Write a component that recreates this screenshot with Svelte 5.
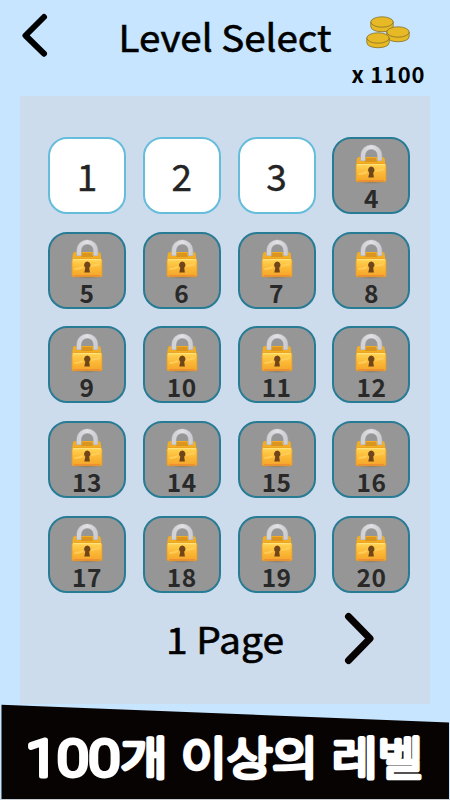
<script>
  const levels = Array.from({ length: 20 }, (_, i) => ({ number: i + 1, locked: i > 2 }));
  const coins = [[25, 6], [41, 16], [21, 22]];
  const words = [
    { text: '100', x: 26, width: 94, latin: true },
    { text: '개', x: 120.5, width: 47 },
    { text: '이상의', x: 181, width: 137 },
    { text: '레벨', x: 332, width: 91 }
  ];
</script>

<main>
  <header>
    <button class="back" aria-label="Back">
      <svg width="30" height="46" viewBox="0 0 30 46"><path d="M24 5 L5.500 23.500 L24 41.700" /></svg>
    </button>
    <svg class="title" width="220" height="56" role="heading" aria-level="1">
      <text x="-.5" y="41.500" textLength="213" lengthAdjust="spacingAndGlyphs">Level Select</text>
    </svg>
    <div class="wallet">
      <svg class="coins" width="46" height="34" viewBox="1 0 46 34">
        {#each coins as [x, y]}
          <path d="M{x - 11.2} {y} v4.5 c0 7 22.4 7 22.4 0 v-4.5 z" />
          <ellipse cx={x} cy={y} rx="11.2" ry="5.2" />
        {/each}
      </svg>
      <svg class="amount" width="80" height="24">
        <text x="5.500" y="17.500" textLength="73" lengthAdjust="spacing">x 1100</text>
      </svg>
    </div>
  </header>

  <section class="board">
    <div class="levels">
      {#each levels as level}
        <button class="tile" class:locked={level.locked}>
          {#if level.locked}
            <svg class="lock" width="34" height="40" viewBox="0 0 34 40">
              <defs>
                <linearGradient id="gold-{level.number}" x2="0" y2="1">
                  <stop offset="0" stop-color="#ffd555" />
                  <stop offset=".5" stop-color="#fbb936" />
                  <stop offset="1" stop-color="#f5a52a" />
                </linearGradient>
                <linearGradient id="steel-{level.number}">
                  <stop offset="0" stop-color="#d2d2d6" />
                  <stop offset=".5" stop-color="#e2e2e6" />
                  <stop offset="1" stop-color="#cdcdd2" />
                </linearGradient>
                <radialGradient id="shade-{level.number}">
                  <stop offset="0" stop-color="#5e5e5e" />
                  <stop offset="1" stop-color="#969696" stop-opacity="0" />
                </radialGradient>
              </defs>
              <ellipse cx="17" cy="36.500" rx="18" ry="3" fill="url(#shade-{level.number})" />
              <path d="M3 13.500 Q3.500 12 5 12 H28.500 Q30.300 12 30.600 13.500 L31.500 20 H2 Z" fill="#f3ad22" />
              <path d="M12 13 H22 L23 17 H11 Z" fill="#d9951f" />
              <path d="M8.900 16 V11 C8.900 -.9 25.700 -.9 25.700 11 V16" fill="none" stroke="#adadb1" stroke-width="5.200" />
              <path d="M8.900 15.500 V11 C8.900 -.9 25.700 -.9 25.700 11 V15.500" fill="none" stroke="url(#steel-{level.number})" stroke-width="4" />
              <rect x="2" y="19" width="30" height="17.800" rx="1.500" fill="url(#gold-{level.number})" stroke="#e39a28" stroke-width=".8" />
              <path d="M3 19.600 H31" stroke="#ffe27b" stroke-width="1.200" />
              <path d="M4 35.800 H30" stroke="#ed853a" stroke-width="1" />
              <path d="M4.500 29 Q9 29 13 27 M21 26 Q26 25 30 24" fill="none" stroke="#ffcd58" stroke-width="2" />
              <path d="M17.300 21.500 a3.600 3.600 0 0 0 -2 6.300 L14.300 32.500 H19.900 L19.200 27.800 a3.600 3.600 0 0 0 -1.900 -6.300Z" fill="#70451a" />
            </svg>
          {/if}
          <span>{level.number}</span>
        </button>
      {/each}
    </div>
    <nav>
      <svg class="page" width="124" height="54">
        <text x="2" y="37" textLength="118" lengthAdjust="spacingAndGlyphs">1 Page</text>
      </svg>
      <button class="next" aria-label="Next page">
        <svg width="32" height="54" viewBox="0 0 32 54"><path d="M5.500 4.500 L27 26.500 L5.500 48.500" /></svg>
      </button>
    </nav>
  </section>

  <footer>
    <svg width="450" height="96" viewBox="0 0 450 96">
      <path d="M1.500 .8 L449 18.500 V95 H1.500 Z" fill="#080303" />
      <path d="M0 95.500 H450" stroke="#c7cdd2" />
      {#each words as word}
        <text class:latin={word.latin} x={word.x} y={word.latin ? 71.5 : 70.5} textLength={word.width} lengthAdjust="spacingAndGlyphs">{word.text}</text>
      {/each}
    </svg>
  </footer>
</main>

<style>
  :global(body) { margin: 0; }
  main {
    width: 450px;
    height: 800px;
    overflow: hidden;
    display: flex;
    flex-direction: column;
    background: #c7e5ff;
    color: #000;
    font-family: "Noto Sans CJK KR", "Noto Sans", sans-serif;
  }
  svg { display: block; flex: none; overflow: visible; }
  button {
    padding: 0;
    border: 0;
    background: none;
    font: inherit;
    color: inherit;
    box-sizing: border-box;
  }
  header { height: 96px; display: flex; flex: none; align-items: flex-start; }
  .back { margin: 12px 0 0 20px; width: 30px; }
  .back path { fill: none; stroke: #000; stroke-width: 6; stroke-linecap: round; stroke-linejoin: round; }
  .title { margin: 10px 0 0 69px; }
  .title text, .page text { font-size: 37px; font-weight: 400; stroke: #000; stroke-width: .6px; }
  .wallet { width: 80px; margin: 16px 0 0 7px; }
  .coins { margin-left: 12px; }
  .coins path, .coins ellipse { fill: #e7ba25; stroke: #85702a; stroke-width: .8; }
  .amount { margin-top: 15px; }
  .amount text { font-size: 22px; font-weight: 700; }
  .board {
    box-sizing: border-box;
    width: 410px;
    height: 608px;
    flex: none;
    margin-left: 20px;
    padding: 41px 20px 0 28px;
    background: #ccdcec;
  }
  .levels {
    display: grid;
    grid-template-columns: repeat(4, 78px);
    grid-auto-rows: 77px;
    column-gap: 16.800px;
    row-gap: 17.700px;
  }
  .tile {
    display: flex;
    flex-direction: column;
    align-items: center;
    justify-content: center;
    border: 2px solid #65bddb;
    border-radius: 19px;
    background: #fff;
    color: #242424;
    font-size: 37px;
    font-weight: 400;
    -webkit-text-stroke: .4px #242424;
    line-height: 40px;
    padding-bottom: 1px;
  }
  .tile.locked {
    justify-content: flex-start;
    padding-top: 6px;
    border-color: #287b94;
    background: #969696;
    color: #292929;
    font-size: 24.500px;
    font-weight: 700;
    line-height: 26px;
    letter-spacing: .5px;
    -webkit-text-stroke: 0;
  }
  nav { display: flex; align-items: center; margin: 18px 0 0 116px; }
  .page { position: relative; top: 6px; }
  .next { margin: 1px 0 0 55px; }
  .next path { fill: none; stroke: #070303; stroke-width: 7; stroke-linecap: round; stroke-linejoin: round; }
  footer { height: 96px; }
  footer text {
    font-size: 45px;
    font-weight: 300;
    fill: #fff;
    stroke: #fff;
    stroke-width: 4.600px;
    stroke-linecap: round;
    stroke-linejoin: round;
  }
  footer .latin { font-family: Roboto, sans-serif; font-size: 50px; font-weight: 300; stroke-width: 5px; }
</style>
